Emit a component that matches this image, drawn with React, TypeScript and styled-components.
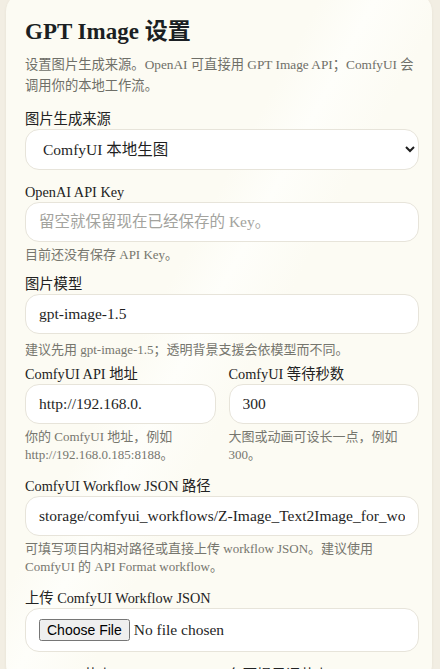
import React from 'react'
import styled, { createGlobalStyle } from 'styled-components'

const GlobalStyle = createGlobalStyle`
  html, body {
    margin: 0;
    padding: 0;
    background: #f2eee3;
    overflow: hidden;
  }
  body {
    font-family: 'Liberation Serif', 'Noto Sans CJK SC', serif;
    color: #262626;
  }
`

const Page = styled.div`
  height: 669px;
  padding: 0 8px 0 6px;
  overflow: hidden;
`

const Card = styled.section`
  margin-top: -8px;
  padding: 25px 13px 0 19px;
  background: linear-gradient(
    118deg,
    #fcfbf3 0%,
    #fcfbf3 40%,
    #fefefa 47%,
    #fcfbf3 56%,
    #fcfbf3 100%
  );
  border-radius: 20px;
  box-shadow: 0 1px 3px rgba(90, 80, 50, 0.08);
`

const Title = styled.h1`
  margin: 0;
  font-size: 23px;
  line-height: 30px;
  font-weight: 700;
  color: #1b1f23;
`

const Description = styled.p`
  margin: 7px 0 0 0;
  font-size: 13.3px;
  line-height: 21px;
  color: #6f6f68;
`

const Field = styled.div<{ $top: number }>`
  display: flex;
  flex-direction: column;
  gap: 1px;
  margin-top: ${(p) => p.$top}px;
  min-width: 0;
`

const Label = styled.label`
  font-size: 14.3px;
  line-height: 18px;
  color: #222222;
`

const controlBase = `
  box-sizing: border-box;
  width: 100%;
  height: 40px;
  border: 1px solid #e7e4da;
  border-radius: 14px;
  background: #ffffff;
  font-family: 'Liberation Serif', 'Noto Sans CJK SC', serif;
  font-size: 15.5px;
  color: #1f1f1f;
  outline: none;
`

const TextInput = styled.input`
  ${controlBase}
  padding: 0 13px;

  &::placeholder {
    color: #a3a39e;
  }
`

const Select = styled.select`
  ${controlBase}
  height: 41px;
  padding: 0 6px 0 13px;
`

const FileBox = styled.div`
  ${controlBase}
  height: 44px;
  display: flex;
  align-items: center;
  padding: 0 13px;

  input {
    font-family: 'Liberation Serif', serif;
    font-size: 15.5px;
    color: #1f1f1f;
  }

  input::file-selector-button {
    font-family: 'Liberation Sans', Arial, sans-serif;
    font-size: 14px;
    margin-right: 4px;
    padding: 1px 6px;
  }
`

const Helper = styled.div<{ $top: number }>`
  margin-top: ${(p) => p.$top}px;
  font-size: 13px;
  line-height: 17.5px;
  color: #76766e;
`

const Row = styled.div<{ $top: number }>`
  display: grid;
  grid-template-columns: 1fr 1fr;
  column-gap: 13px;
  margin-top: ${(p) => p.$top}px;
`

export default function App() {
  return (
    <>
      <GlobalStyle />
      <Page>
        <Card>
          <Title>GPT Image 设置</Title>
          <Description>
            设置图片生成来源。OpenAI 可直接用 GPT Image API；ComfyUI 会调用你的本地工作流。
          </Description>

          <Field $top={14}>
            <Label>图片生成来源</Label>
            <Select defaultValue="comfyui">
              <option value="openai">OpenAI GPT Image</option>
              <option value="comfyui">ComfyUI 本地生图</option>
            </Select>
          </Field>

          <Field $top={13}>
            <Label>OpenAI API Key</Label>
            <TextInput type="password" placeholder="留空就保留现在已经保存的 Key。" />
            <Helper $top={3}>目前还没有保存 API Key。</Helper>
          </Field>

          <Field $top={11}>
            <Label>图片模型</Label>
            <TextInput defaultValue="gpt-image-1.5" />
            <Helper $top={6}>建议先用 gpt-image-1.5；透明背景支援会依模型而不同。</Helper>
          </Field>

          <Row $top={7}>
            <Field $top={0}>
              <Label>ComfyUI API 地址</Label>
              <TextInput defaultValue="http://192.168.0." />
              <Helper $top={3}>你的 ComfyUI 地址，例如 http://192.168.0.185:8188。</Helper>
            </Field>
            <Field $top={0}>
              <Label>ComfyUI 等待秒数</Label>
              <TextInput defaultValue="300" />
              <Helper $top={3}>大图或动画可设长一点，例如 300。</Helper>
            </Field>
          </Row>

          <Field $top={14}>
            <Label>ComfyUI Workflow JSON 路径</Label>
            <TextInput defaultValue="storage/comfyui_workflows/Z-Image_Text2Image_for_workflow_api.json" />
            <Helper $top={3}>
              可填写项目内相对路径或直接上传 workflow JSON。建议使用 ComfyUI 的 API Format workflow。
            </Helper>
          </Field>

          <Field $top={14}>
            <Label>上传 ComfyUI Workflow JSON</Label>
            <FileBox>
              <input type="file" accept=".json" />
            </FileBox>
          </Field>

          <Row $top={14}>
            <Field $top={0}>
              <Label>ComfyUI 节点 ID</Label>
            </Field>
            <Field $top={0}>
              <Label>负面提示词节点</Label>
            </Field>
          </Row>
        </Card>
      </Page>
    </>
  )
}
